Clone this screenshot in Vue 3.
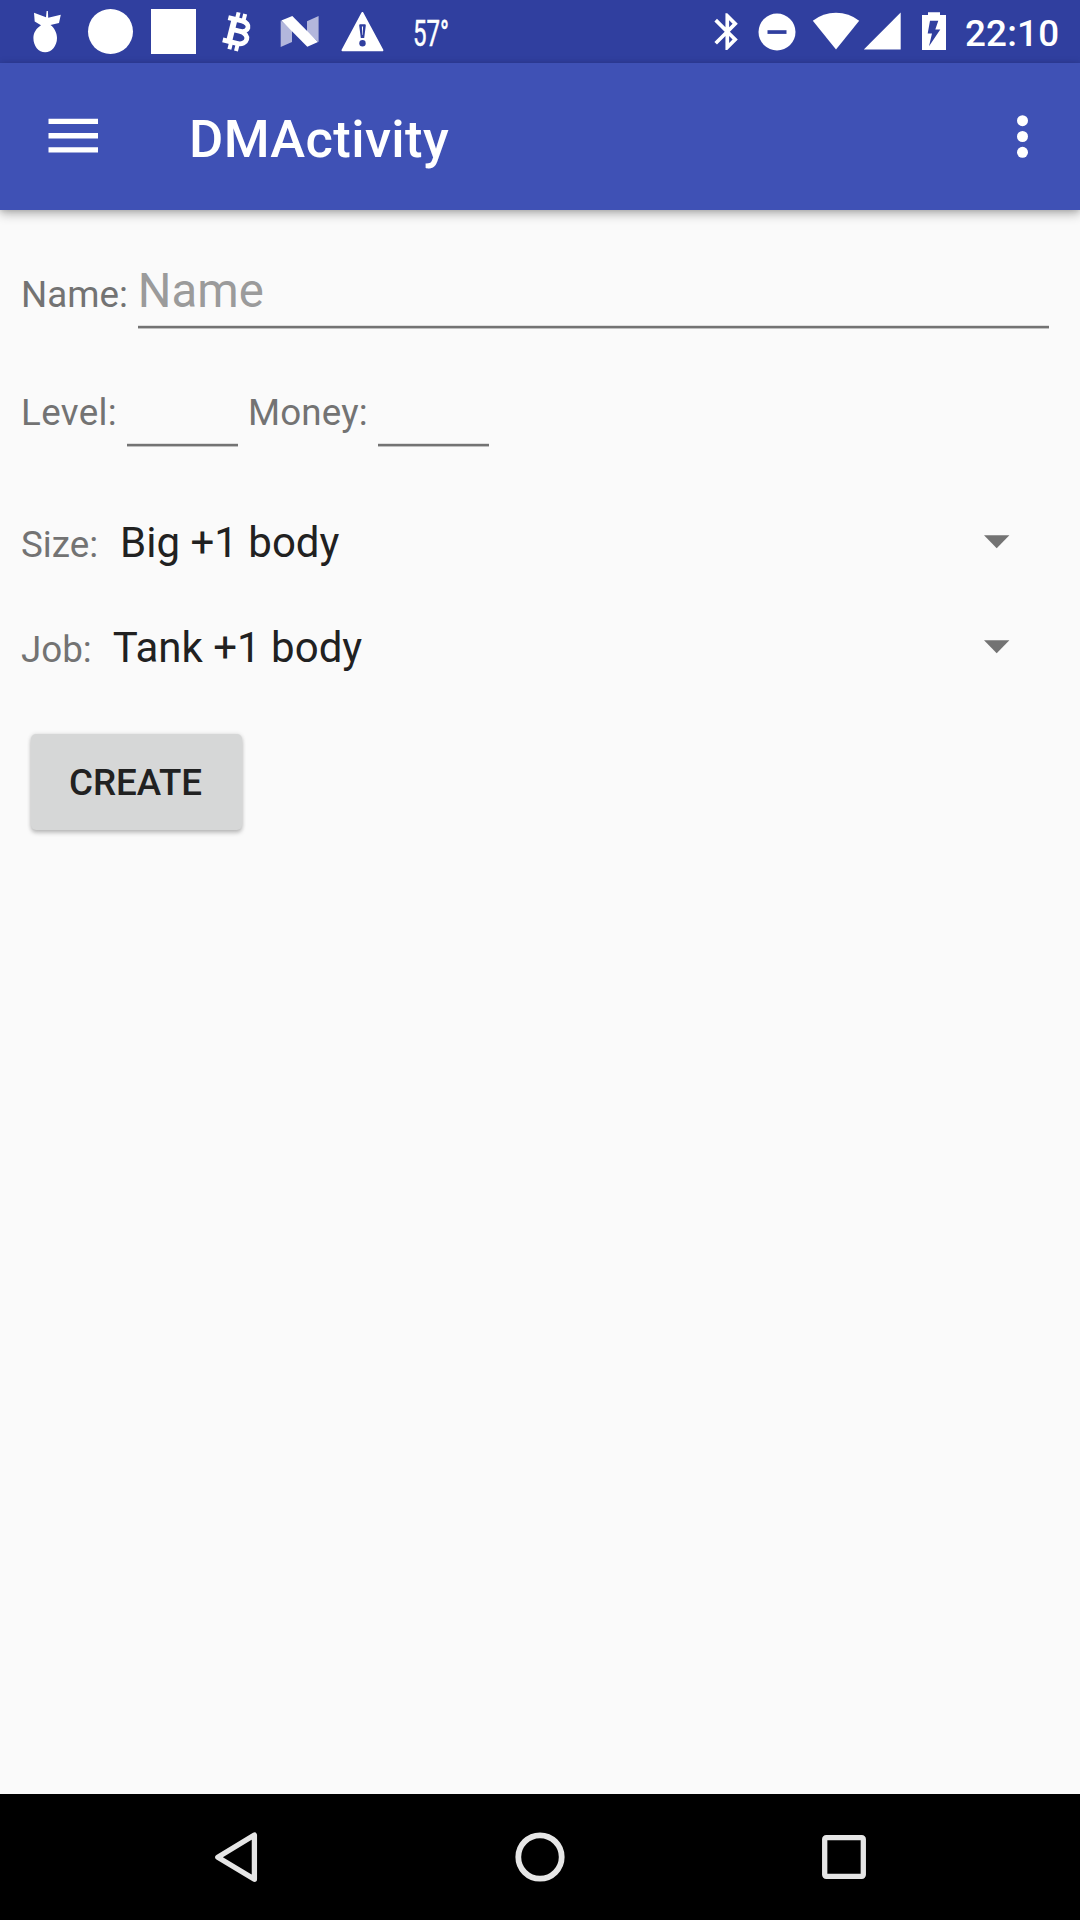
<script setup>
const spinners = [
  { id: 'size', label: 'Size:', value: 'Big +1 body' },
  { id: 'job', label: 'Job:', value: 'Tank +1 body' },
]
</script>

<template>
  <div class="screen">
    <header class="status">
      <div class="group">
        <svg width="75" height="63" viewBox="0 0 75 63" fill="#fff">
          <path d="M34 12.7L46 17.3L46.6 11L47.9 11L48.2 17.8L60.8 14.8L59 23L50.5 25C54 27.5 57 32.5 57 38C57 46 51.5 52.3 45.2 52.3C38.5 52.3 33.4 46 33.4 38C33.4 32.5 36.5 28 41 25.2L34.7 21.5Z" />
        </svg>
        <svg width="68" height="63" viewBox="75 0 68 63"><circle cx="110.5" cy="31.5" r="22.5" fill="#fff" /></svg>
        <svg width="62" height="63" viewBox="143 0 62 63"><path d="M151 9h45v45h-45z" fill="#fff" /></svg>
        <svg width="62" height="63" viewBox="205 0 62 63">
          <g transform="translate(236.7 31.5) rotate(14)" fill="none" stroke="#fff">
            <path d="M-11.5 -11.5H2.5C13 -11.5 12 -1 2.5 -1H-5M2.5 -1C15 -1 14 11.5 3 11.5H-11.5" stroke-width="4.800" />
            <path d="M-5 -12V12" stroke-width="6" />
            <path d="M-2.8 -19V-12M4 -19V-12M-2.8 12V19M4 12V19" stroke-width="4" />
          </g>
        </svg>
        <svg width="63" height="63" viewBox="267 0 63 63">
          <path d="M280.7 20.5L292 30V42L280.7 47ZM307 21.3L318.6 16V42L307 32Z" fill="#b3b7dc" />
          <path d="M281.3 20.5L292.3 16L318 42L307.3 46.8Z" fill="#fff" />
        </svg>
        <svg width="65" height="63" viewBox="330 0 65 63">
          <path d="M362.4 13L382.4 50.3H342.5Z" fill="#fff" stroke="#fff" stroke-width="2" stroke-linejoin="round" />
          <path d="M359.2 25.5Q359 24.2 360.3 24.2H364.7Q366 24.2 365.8 25.5L364.2 38H360.8Z" fill="#303f9f" />
          <path d="M361.9 26.5H363.1L362.7 35H362.3Z" fill="#fff" />
          <circle cx="362.5" cy="43.3" r="3.2" fill="#303f9f" />
        </svg>
        <svg width="120" height="63" viewBox="395 0 120 63">
          <text x="413" y="45.6" textLength="36" lengthAdjust="spacingAndGlyphs" class="temp">57°</text>
        </svg>
      </div>
      <div class="group">
        <svg width="50" height="63" viewBox="700 0 50 63">
          <path transform="translate(705.2 9.6) scale(1.84)" fill="#fff" d="M17.71 7.71L12 2h-1v7.59L6.41 5 5 6.41 10.59 12 5 17.59 6.41 19 11 14.41V22h1l5.71-5.71-4.3-4.29 4.3-4.29zM13 5.83l1.88 1.88L13 9.59V5.83zm1.88 10.46L13 18.17v-3.76l1.88 1.88z" />
        </svg>
        <svg width="55" height="63" viewBox="750 0 55 63">
          <circle cx="777" cy="32" r="18.5" fill="#fff" />
          <path d="M767.5 30.2h19v3.7h-19z" fill="#303f9f" />
        </svg>
        <svg width="57" height="63" viewBox="805 0 57 63"><path d="M836 49.5L812.8 20.7Q823 12.7 836 12.7T859.2 20.7Z" fill="#fff" /></svg>
        <svg width="48" height="63" viewBox="862 0 48 63"><path d="M863.8 49.5L900.7 12.6V49.5Z" fill="#fff" /></svg>
        <svg width="54" height="63" viewBox="910 0 54 63">
          <path d="M922 15H928V12.2H940V15H946V50H922Z" fill="#fff" />
          <path d="M930 20.7H938.3L935.3 29.5H940.3L929 46.3L932 33.5H927.7Z" fill="#303f9f" />
        </svg>
        <span class="clock">22:10</span>
      </div>
    </header>

    <div class="toolbar">
      <svg width="147" height="147" viewBox="0 63 147 147"><path d="M48.5 118.8H98V124H48.5ZM48.5 133.1H98V138.4H48.5ZM48.5 147.3H98V152.6H48.5Z" fill="#fff" /></svg>
      <h1>DMActivity</h1>
      <svg width="105" height="147" viewBox="975 63 105 147" fill="#fff">
        <circle cx="1022.5" cy="120.7" r="5.5" /><circle cx="1022.5" cy="136.5" r="5.5" /><circle cx="1022.5" cy="152.3" r="5.5" />
      </svg>
    </div>

    <main>
      <div class="row name-row">
        <span class="label">Name:</span>
        <div class="field wide">Name</div>
      </div>
      <div class="row stats-row">
        <span class="label level">Level:</span>
        <div class="field short first">&nbsp;</div>
        <span class="label money">Money:</span>
        <div class="field short">&nbsp;</div>
      </div>
      <div v-for="s in spinners" :key="s.id" class="row spinner" :class="s.id">
        <span class="label">{{ s.label }}</span>
        <span class="value">{{ s.value }}</span>
        <svg width="26" height="105" viewBox="0 0 26 105"><path d="M0 45.2H25.4L12.7 58.2Z" fill="#737373" /></svg>
      </div>
      <button class="create" type="button">CREATE</button>
    </main>

    <nav>
      <svg width="249" height="126" viewBox="112 1794 249 126"><path d="M217.8 1857.2L254.4 1835V1879.3Z" /></svg>
      <svg width="249" height="126" viewBox="416 1794 249 126"><circle cx="540" cy="1857" r="21.7" stroke-width="5.800" /></svg>
      <svg width="249" height="126" viewBox="720 1794 249 126"><rect x="824.7" y="1837.7" width="38.6" height="38.6" rx="1.5" /></svg>
    </nav>
  </div>
</template>

<style>
body {
  margin: 0;
}
</style>

<style scoped>
.screen {
  width: 1080px;
  height: 1920px;
  display: flex;
  flex-direction: column;
  overflow: hidden;
  background: #fafafa;
  font-family: Roboto, "Noto Sans", sans-serif;
}
svg {
  display: block;
  flex: none;
}
.status {
  height: 63px;
  flex: none;
  display: flex;
  justify-content: space-between;
  background: #303f9f;
  color: #fff;
}
.group {
  display: flex;
}
.temp {
  font-size: 37px;
  fill: #fff;
  stroke: #fff;
  stroke-width: 0.5px;
}
.clock {
  width: 115px;
  margin-left: 1px;
  font-size: 36.75px;
  font-weight: 500;
  line-height: 67px;
  letter-spacing: 0.2px;
  white-space: nowrap;
}
.toolbar {
  height: 147px;
  flex: none;
  display: flex;
  background: #3f51b5;
  color: #fff;
  box-shadow: 0 4px 10px rgba(0, 0, 0, 0.28), 0 1px 5px rgba(0, 0, 0, 0.12);
}
h1 {
  flex: 1;
  margin: 0 0 0 42px;
  font-size: 52.5px;
  font-weight: 500;
  line-height: 152px;
  letter-spacing: 0.36px;
}
main {
  flex: 1;
  display: flex;
  flex-direction: column;
  padding-left: 21px;
}
.row {
  display: flex;
  align-items: baseline;
}
.label {
  flex: none;
  font-size: 36.75px;
  line-height: 44px;
  color: #737373;
}
.level {
  width: 96px;
  letter-spacing: 0.35px;
}
.money {
  width: 120px;
  letter-spacing: 0.15px;
}
.field {
  font-size: 47.25px;
  line-height: 56px;
  color: #9b9b9b;
  padding-bottom: 10px;
  background: linear-gradient(#dedede 0 1px, #737373 1px 3px, #c0c0c0 3px 4px) bottom / 100% 4px no-repeat;
}
.name-row {
  margin-top: 53px;
  height: 66px;
}
.wide {
  width: 911px;
  margin-left: 10px;
}
.stats-row {
  margin-top: 52px;
  height: 66px;
}
.short {
  width: 111px;
  margin-left: 10px;
}
.first {
  margin-right: 10px;
}
.spinner {
  height: 105px;
  align-items: center;
  padding-right: 70px;
}
.stats-row + .spinner {
  margin-top: 43px;
}
.spinner .label {
  line-height: 105px;
  padding-top: 4px;
}
.value {
  flex: 1;
  margin-left: 21px;
  font-size: 42px;
  line-height: 105px;
  color: #212121;
}
.size .value {
  margin-left: 22px;
}
.create {
  width: 211px;
  height: 96px;
  margin: 34px 0 0 10px;
  padding: 0 2px 0 0;
  border: 0;
  border-radius: 5px;
  background: #d6d7d7;
  color: #212121;
  font: 500 36.75px/98px Roboto, "Noto Sans", sans-serif;
  box-shadow: 0 3px 4px rgba(0, 0, 0, 0.22), 0 0 4px rgba(0, 0, 0, 0.12);
}
nav {
  height: 126px;
  flex: none;
  display: flex;
  padding-left: 112px;
  gap: 55px;
  background: #000;
  fill: none;
  stroke: #e6e6e6;
  stroke-width: 5.3;
  stroke-linejoin: round;
}
</style>
